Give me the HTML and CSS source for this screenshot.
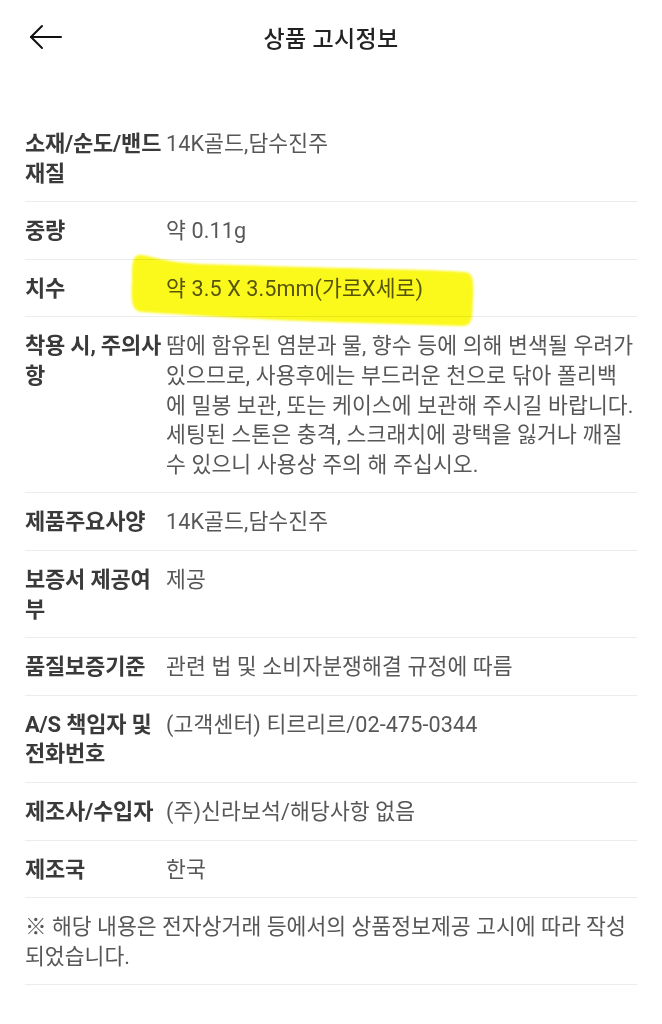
FILE: index.html
```html
<!DOCTYPE html>
<html lang="ko">
<head>
<meta charset="utf-8">
<title>상품 고시정보</title>
<link rel="stylesheet" href="styles.css">
</head>
<body>
<div class="page">
  <header class="header">
    <button class="back" aria-label="뒤로">
      <svg width="34" height="26" viewBox="0 0 34 26" fill="none" stroke="#111" stroke-width="2" stroke-linecap="round" stroke-linejoin="round">
        <path d="M2 13H32"/>
        <path d="M13 2L2 13L13 24"/>
      </svg>
    </button>
    <h1 class="title">상품 고시정보</h1>
  </header>

  <div class="list">
    <div class="row"><div class="label">소재/순도/밴드 재질</div><div class="value">14K골드,담수진주</div></div>
    <div class="row"><div class="label">중량</div><div class="value">약 0.11g</div></div>
    <div class="row"><div class="label">치수</div><div class="value">약 3.5 X 3.5mm(가로X세로)</div></div>
    <div class="row"><div class="label">착용 시, 주의사항</div><div class="value">땀에 함유된 염분과 물, 향수 등에 의해 변색될 우려가<br>있으므로, 사용후에는 부드러운 천으로 닦아 폴리백<br>에 밀봉 보관, 또는 케이스에 보관해 주시길 바랍니다.<br>세팅된 스톤은 충격, 스크래치에 광택을 잃거나 깨질<br>수 있으니 사용상 주의 해 주십시오.</div></div>
    <div class="row"><div class="label">제품주요사양</div><div class="value">14K골드,담수진주</div></div>
    <div class="row"><div class="label">보증서 제공여부</div><div class="value">제공</div></div>
    <div class="row"><div class="label">품질보증기준</div><div class="value">관련 법 및 소비자분쟁해결 규정에 따름</div></div>
    <div class="row"><div class="label">A/S 책임자 및 전화번호</div><div class="value">(고객센터) 티르리르/02-475-0344</div></div>
    <div class="row"><div class="label">제조사/수입자</div><div class="value">(주)신라보석/해당사항 없음</div></div>
    <div class="row"><div class="label">제조국</div><div class="value">한국</div></div>
    <div class="note">※ 해당 내용은 전자상거래 등에서의 상품정보제공 고시에 따라 작성되었습니다.</div>
  </div>

  <svg class="highlight" width="662" height="1024" viewBox="0 0 662 1024" aria-hidden="true">
    <defs>
      <filter id="soft" x="-5%" y="-20%" width="110%" height="140%">
        <feGaussianBlur stdDeviation="1.2"/>
      </filter>
    </defs>
    <path filter="url(#soft)" fill="#fbf81c" d="M140 255 C150 255 160 262 200 264 L300 267 C380 269 440 270 465 272 C473 273 474 280 473 300 C472 315 474 326 462 326 L330 322 C250 319 170 314 142 312 C131 311 131 300 132 280 C132 265 132 255 140 255 Z"/>
  </svg>
</div>
</body>
</html>
```

FILE: styles.css
```css
* { box-sizing: border-box; }
html, body { margin: 0; padding: 0; background: #fff; }
body {
  font-family: Roboto, "Noto Sans CJK KR", sans-serif;
  color: #555;
  -webkit-font-smoothing: antialiased;
}
.page {
  position: relative;
  width: 662px;
  min-height: 1024px;
}
.header {
  height: 74px;
  display: flex;
  align-items: center;
  justify-content: center;
  position: relative;
}
.back {
  position: absolute;
  left: 29px;
  top: 24px;
  width: 34px;
  height: 26px;
  padding: 0;
  border: 0;
  background: none;
  display: flex;
}
.title {
  margin: 0;
  font-size: 23px;
  font-weight: 500;
  color: #222;
  letter-spacing: 0.3px;
}
.list {
  margin-top: 41px;
  padding: 0 25px;
}
.row {
  display: grid;
  grid-template-columns: 140px 1fr;
  column-gap: 1px;
  padding: 14px 0 13px;
  border-bottom: 1px solid #ececec;
  font-size: 21.6px;
  line-height: 29.6px;
}
.label {
  font-weight: 700;
  color: #3a3a3a;
  font-size: 22px;
  letter-spacing: -0.2px;
}
.value {
  color: #575757;
  letter-spacing: 0.1px;
}
.note {
  padding: 14px 0 13px;
  border-bottom: 1px solid #ececec;
  font-size: 21.6px;
  line-height: 29.6px;
  color: #575757;
}
.highlight {
  position: absolute;
  left: 0;
  top: 0;
  pointer-events: none;
  mix-blend-mode: multiply;
}
```
